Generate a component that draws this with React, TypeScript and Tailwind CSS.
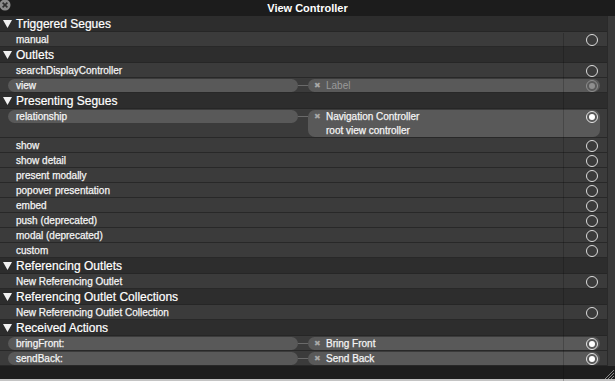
import React from "react";

type Target = { name: string; sub?: string; dim?: boolean };

interface RowData {
  label: string;
  target?: Target;
}

interface Section {
  title: string;
  rows: RowData[];
}

const SECTIONS: Section[] = [
  { title: "Triggered Segues", rows: [{ label: "manual" }] },
  {
    title: "Outlets",
    rows: [
      { label: "searchDisplayController" },
      { label: "view", target: { name: "Label", dim: true } },
    ],
  },
  {
    title: "Presenting Segues",
    rows: [
      { label: "relationship", target: { name: "Navigation Controller", sub: "root view controller" } },
      { label: "show" },
      { label: "show detail" },
      { label: "present modally" },
      { label: "popover presentation" },
      { label: "embed" },
      { label: "push (deprecated)" },
      { label: "modal (deprecated)" },
      { label: "custom" },
    ],
  },
  { title: "Referencing Outlets", rows: [{ label: "New Referencing Outlet" }] },
  { title: "Referencing Outlet Collections", rows: [{ label: "New Referencing Outlet Collection" }] },
  {
    title: "Received Actions",
    rows: [
      { label: "bringFront:", target: { name: "Bring Front" } },
      { label: "sendBack:", target: { name: "Send Back" } },
    ],
  },
];

function Radio({ filled, dim }: { filled?: boolean; dim?: boolean }) {
  if (filled) {
    return (
      <div
        className={`flex h-[12px] w-[12px] shrink-0 items-center justify-center rounded-full border-[1.5px] ${
          dim ? "border-[#8e8e8e]" : "border-[#e6e6e6]"
        }`}
      >
        <div className={`h-[6px] w-[6px] rounded-full ${dim ? "bg-[#8e8e8e]" : "bg-white"}`} />
      </div>
    );
  }
  return <div className="h-[12px] w-[12px] shrink-0 rounded-full border-[1.5px] border-[#dcdcdc]" />;
}

function Header({ title }: { title: string }) {
  return (
    <div className="flex h-[16px] items-center border-b border-[#262626] bg-[#2d2d2d] pt-px text-[12px] leading-none text-white [-webkit-text-stroke:0.2px_#fff]">
      <svg width="9" height="8" viewBox="0 0 9 8" className="ml-[3px] mr-[4px]">
        <polygon points="0,0 9,0 4.5,8" fill="#f2f2f2" />
      </svg>
      <span>{title}</span>
    </div>
  );
}

function Row({ row }: { row: RowData }) {
  const t = row.target;
  if (!t) {
    return (
      <div className="flex h-[15px] items-center justify-between border-b border-[#282828] bg-[#3b3b3b] pl-4 pr-[9px] pt-px text-[10px] leading-none text-[#f4f4f4] [-webkit-text-stroke:0.25px_#f4f4f4]">
        <span>{row.label}</span>
        <Radio />
      </div>
    );
  }
  const tall = !!t.sub;
  return (
    <div
      className={`flex items-start border-b border-[#282828] bg-[#3b3b3b] pl-2 pt-px text-[10px] leading-none ${
        tall ? "h-[29px]" : "h-[15px]"
      }`}
    >
      <div className="flex h-[13px] w-[290px] items-center rounded-full bg-[#595959] pl-2 pt-px text-[#f4f4f4] [-webkit-text-stroke:0.25px_#f4f4f4]">
        {row.label}
      </div>
      <div className="mt-[6px] h-px w-[10px] bg-[#6a6a6a]" />
      <div
        className={`flex w-[292px] justify-between bg-[#595959] pl-[6px] pr-[2px] ${
          tall ? "h-[27px] rounded-[7px] pt-px" : "h-[13px] items-center rounded-full"
        }`}
      >
        <div className="flex flex-col gap-[4px]">
          <div className="flex h-[11px] items-center pt-px">
            <span className="w-[12px] text-[8px] text-[#a8a8a8]">✖</span>
            <span
              className={
                t.dim
                  ? "text-[#9a9a9a]"
                  : "text-[#f4f4f4] [-webkit-text-stroke:0.25px_#f4f4f4]"
              }
            >
              {t.name}
            </span>
          </div>
          {t.sub && (
            <span className="pl-[12px] text-[#f4f4f4] [-webkit-text-stroke:0.25px_#f4f4f4]">{t.sub}</span>
          )}
        </div>
        <Radio filled dim={t.dim} />
      </div>
    </div>
  );
}

export default function App() {
  return (
    <div className="relative h-[381px] w-[615px] overflow-hidden bg-[#1e1e1e] font-['Liberation_Sans',Arial,sans-serif]">
      {/* title bar */}
      <div className="relative flex h-[16px] items-center justify-center bg-[#1c1c1c]">
        <svg width="12" height="12" viewBox="0 0 12 12" className="absolute left-[-1px] top-[-1px]">
          <circle cx="6" cy="6" r="5.5" fill="#8c8c8c" />
          <path d="M3.6 3.6 L8.4 8.4 M8.4 3.6 L3.6 8.4" stroke="#2e2e2e" strokeWidth="1.6" />
        </svg>
        <span className="text-[11px] font-bold leading-none text-white">View Controller</span>
      </div>

      <div className="flex h-[350px]">
        <div className="flex-1">
          {SECTIONS.map((s) => (
            <div key={s.title}>
              <Header title={s.title} />
              {s.rows.map((r) => (
                <Row key={r.label} row={r} />
              ))}
            </div>
          ))}
        </div>
        <div className="w-[8px] border-l border-[#2a2a2a] bg-[#393939]" />
      </div>

      {/* ghost of the canvas behind the panel */}
      <div className="pointer-events-none absolute bottom-0 left-[563px] top-[33px] w-px bg-black/20" />

      <div className="h-[13px] bg-[#1e1e1e]" />
      <div className="h-[2px] bg-[#c4c4c4]" />

      <svg width="10" height="10" viewBox="0 0 10 10" className="absolute bottom-[2px] right-[1px]">
        <path d="M1 10 L10 1 M4 10 L10 4 M7 10 L10 7" stroke="#8a8a8a" strokeWidth="1" />
      </svg>
    </div>
  );
}
